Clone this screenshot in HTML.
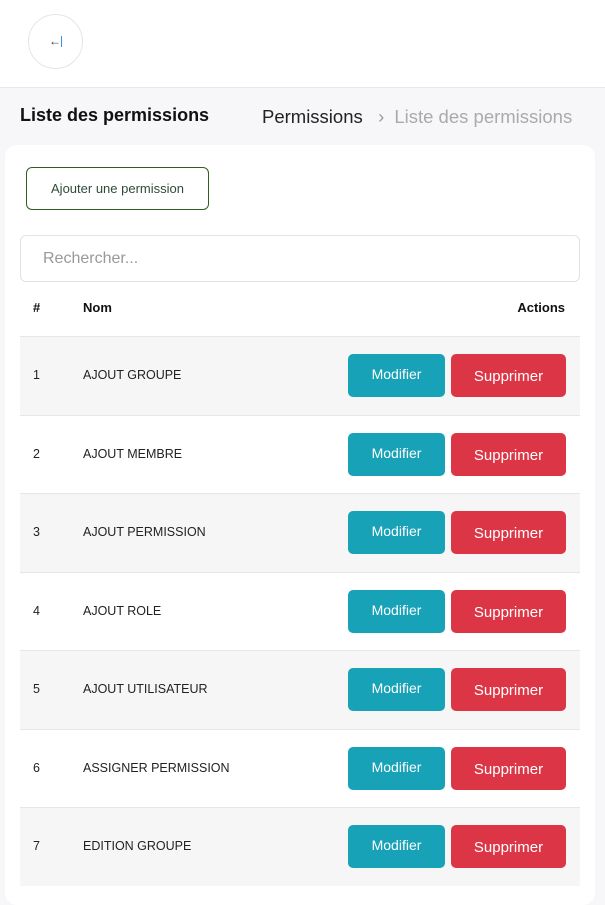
<!DOCTYPE html>
<html><head><meta charset="utf-8"><style>
*{margin:0;padding:0;box-sizing:border-box}
body{width:605px;height:882px;overflow:hidden;background:#f7f7f9;font-family:"Liberation Sans",sans-serif;position:relative}
.top{position:absolute;left:0;top:0;width:605px;height:88px;background:#fff;border-bottom:1px solid #e8e8ec}
.circ{position:absolute;left:28px;top:14px;width:55px;height:55px;border:1px solid #e6e6e6;border-radius:50%;font-size:12px;color:#333;text-align:center;line-height:53px}
.circ b{display:inline-block;width:1px;height:11px;background:#3a8de0;vertical-align:middle}
.title{position:absolute;left:20px;top:105px;font-size:18px;font-weight:bold;color:#111}
.bc{position:absolute;left:262px;top:106px;font-size:18.5px;color:#222;white-space:nowrap}
.bc span{color:#999}
.bc .l{color:#aaa;margin-left:10px}
.card{position:absolute;left:5px;top:145px;width:590px;height:760px;background:#fff;border-radius:12px}
.add{position:absolute;left:26px;top:167px;width:183px;height:43px;border:1px solid #2f5e1e;border-radius:6px;font-size:13px;color:#2e4b3a;text-align:center;line-height:41px}
.search{position:absolute;left:20px;top:235px;width:560px;height:47px;border:1px solid #e3e3e3;border-radius:6px;font-size:16px;color:#999;padding-left:22px;line-height:45px}
.th{position:absolute;top:300px;font-size:13px;font-weight:bold;color:#111}
.row{position:absolute;left:20px;width:560px;height:79px;border-top:1px solid #e6e6e6;font-size:12.5px;color:#222}
.row.g{background:#f6f6f6}
.row .n{position:absolute;left:13px;top:31px}
.row .m{position:absolute;left:63px;top:31px}
.mod{position:absolute;left:328px;top:17px;width:97px;height:43px;background:#17a2b8;border-radius:5px;color:#fff;font-size:14px;text-align:center;line-height:41px}
.sup{position:absolute;left:431px;top:17px;width:115px;height:43px;background:#dc3545;border-radius:5px;color:#fff;font-size:15px;text-align:center;line-height:45px}
</style></head><body>
<div class="top"><div class="circ">&larr;<b></b></div></div>
<div class="title">Liste des permissions</div>
<div class="bc">Permissions &nbsp;&nbsp;<span>›</span><span class="l">Liste des permissions</span></div>
<div class="card"></div>
<div class="add">Ajouter une permission</div>
<div class="search">Rechercher...</div>
<div class="th" style="left:33px">#</div>
<div class="th" style="left:83px">Nom</div>
<div class="th" style="right:40px">Actions</div>
<div class="row g" style="top:336px"><span class="n">1</span><span class="m">AJOUT GROUPE</span><div class="mod">Modifier</div><div class="sup">Supprimer</div></div>
<div class="row" style="top:415px"><span class="n">2</span><span class="m">AJOUT MEMBRE</span><div class="mod">Modifier</div><div class="sup">Supprimer</div></div>
<div class="row g" style="top:493px"><span class="n">3</span><span class="m">AJOUT PERMISSION</span><div class="mod">Modifier</div><div class="sup">Supprimer</div></div>
<div class="row" style="top:572px"><span class="n">4</span><span class="m">AJOUT ROLE</span><div class="mod">Modifier</div><div class="sup">Supprimer</div></div>
<div class="row g" style="top:650px"><span class="n">5</span><span class="m">AJOUT UTILISATEUR</span><div class="mod">Modifier</div><div class="sup">Supprimer</div></div>
<div class="row" style="top:729px"><span class="n">6</span><span class="m">ASSIGNER PERMISSION</span><div class="mod">Modifier</div><div class="sup">Supprimer</div></div>
<div class="row g" style="top:807px"><span class="n">7</span><span class="m">EDITION GROUPE</span><div class="mod">Modifier</div><div class="sup">Supprimer</div></div>
</body></html>
